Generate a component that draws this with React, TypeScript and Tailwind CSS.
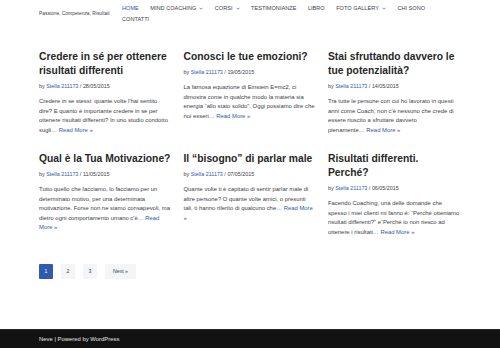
import { ReactNode } from 'react';

interface Post {
  title: string;
  date: string;
  excerpt: string;
  more: string;
}

// line breaks are fixed so the wrap matches the original page at this tiny size
const posts: Post[] = [
  {
    title: 'Credere in sé per ottenere\nrisultati differenti',
    date: '28/05/2015',
    excerpt:
      "Credere in se stessi: quante volte l'hai sentito\ndire? E quanto è importante credere in se per\nottenere risultati differenti? In uno studio condotto\nsugli…",
    more: 'Read More »',
  },
  {
    title: 'Conosci le tue emozioni?',
    date: '19/05/2015',
    excerpt:
      'La famosa equazione di Einstein E=mc2, ci\ndimostra come in qualche modo la materia sia\nenergia “allo stato solido”. Oggi possiamo dire che\nnoi esseri…',
    more: 'Read More »',
  },
  {
    title: 'Stai sfruttando davvero le\ntue potenzialità?',
    date: '14/05/2015',
    excerpt:
      "Tra tutte le persone con cui ho lavorato in questi\nanni come Coach, non c'è nessuno che crede di\nessere riuscito a sfruttare davvero\npienamente…",
    more: 'Read More »',
  },
  {
    title: 'Qual è la Tua Motivazione?',
    date: '11/05/2015',
    excerpt:
      "Tutto quello che facciamo, lo facciamo per un\ndeterminato motivo, per una determinata\nmotivazione. Forse non ne siamo consapevoli, ma\ndietro ogni comportamento umano c'è…",
    more: 'Read\nMore »',
  },
  {
    title: 'Il “bisogno” di parlar male',
    date: '07/05/2015',
    excerpt:
      'Quante volte ti è capitato di sentir parlar male di\naltre persone? O quante volte amici, o presunti\ntali, ti hanno riferito di qualcuno che…',
    more: 'Read More\n»',
  },
  {
    title: 'Risultati differenti.\nPerché?',
    date: '06/05/2015',
    excerpt:
      'Facendo Coaching, una delle domande che\nspesso i miei clienti mi fanno è: “Perché otteniamo\nrisultati differenti?” e“Perché io non riesco ad\nottenere i risultati…',
    more: 'Read More »',
  },
];

const menu: { label: string; caret?: boolean; active?: boolean }[] = [
  { label: 'HOME', active: true },
  { label: 'MIND COACHING', caret: true },
  { label: 'CORSI', caret: true },
  { label: 'TESTIMONIANZE' },
  { label: 'LIBRO' },
  { label: 'FOTO GALLERY', caret: true },
  { label: 'CHI SONO' },
  { label: 'CONTATTI' },
];

function Caret() {
  return (
    <svg width="4" height="3" viewBox="0 0 8 5" className="ml-[3px]" fill="none">
      <path d="M1 1l3 3 3-3" stroke="currentColor" strokeWidth="1.2" />
    </svg>
  );
}

function PageLink({ children, active }: { children: ReactNode; active?: boolean }) {
  return (
    <a
      className={`h-[15px] min-w-[14px] px-[4px] flex items-center justify-center rounded-[1px] ${
        active ? 'bg-[#2f5aae] text-white' : 'bg-[#f4f5f7] text-[#404248]'
      }`}
    >
      {children}
    </a>
  );
}

export default function App() {
  return (
    <div className="h-[348px] flex flex-col bg-white font-['Liberation_Sans',Arial,sans-serif] text-[#404248]">
      <header className="px-[39px] pt-[2.5px] flex items-center">
        <div className="w-[83px] shrink-0 text-[4.9px] text-[#404248]">Passione, Competenza, Risultati</div>
        <nav className="w-[320px] flex flex-wrap gap-x-[11.5px] text-[5.6px] leading-[11px]">
          {menu.map((m) => (
            <a key={m.label} className={`flex items-center ${m.active ? 'text-[#2f5aae]' : 'text-[#404248]'}`}>
              {m.label}
              {m.caret && <Caret />}
            </a>
          ))}
        </nav>
      </header>

      <main className="px-[39px] pt-[25px]">
        <div className="grid grid-cols-[133px_133px_133px] gap-x-[11.5px] gap-y-[16.5px]">
          {posts.map((p) => (
            <article key={p.title}>
              <h2 className="whitespace-pre text-[10.3px] leading-[14px] font-bold text-[#272727]">{p.title}</h2>
              <div className="mt-[4px] text-[5.4px] leading-[8px]">
                by <a className="text-[#2f5aae]">Stella 211173</a> / {p.date}
              </div>
              <p className="mt-[7.5px] whitespace-pre text-[5.9px] leading-[9.5px]">
                {p.excerpt} <a className="text-[#2f5aae]">{p.more}</a>
              </p>
            </article>
          ))}
        </div>

        <div className="mt-[27px] flex gap-[8px] text-[5.2px]">
          <PageLink active>1</PageLink>
          <PageLink>2</PageLink>
          <PageLink>3</PageLink>
          <PageLink>
            <span className="px-[4px]">Next »</span>
          </PageLink>
        </div>
      </main>

      <footer className="mt-auto h-[19px] bg-[#121212] border-t border-[#262626] px-[39px] flex items-center text-[5.9px] text-[#e6e6e6]">
        Neve | Powered by WordPress
      </footer>
    </div>
  );
}
